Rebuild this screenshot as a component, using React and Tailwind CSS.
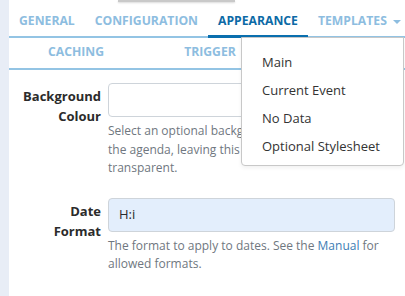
import React from 'react';

const font = { fontFamily: '"Open Sans", "Noto Sans", sans-serif' };

const topTabs = [
    { label: 'GENERAL' },
    { label: 'CONFIGURATION' },
    { label: 'APPEARANCE', active: true },
    { label: 'TEMPLATES', caret: true },
];

const subTabs = ['CACHING', 'TRIGGER', 'INTERACTIVE'];

const templateItems = ['Main', 'Current Event', 'No Data', 'Optional Stylesheet'];

function FieldRow({ label, children, help }) {
    return (
        <div className="flex gap-[7px]">
            <div className="w-[92px] shrink-0 pt-[3px] text-right text-[13px] font-bold leading-[20px] text-[#2b2b2b]">
                {label}
            </div>
            <div className="min-w-0 flex-1 pr-[10px]">
                {children}
                <p className="mt-[5px] text-[12px] leading-[18.5px] text-[#6f7780]">{help}</p>
            </div>
        </div>
    );
}

export default function App() {
    return (
        <div className="flex h-[296px] w-[405px] overflow-hidden bg-white" style={font}>
            <div className="w-[9px] shrink-0 bg-[#e8edf6]" />

            <div className="relative min-w-0 flex-1 overflow-hidden">
                <div className="ml-[109px] h-[2px] w-[117px] bg-[#c9c9c9] shadow-[0_1px_2px_rgba(0,0,0,0.15)]" />

                <ul className="flex h-[36px] items-end border-b-2 border-[#93c4e4]">
                    {topTabs.map((tab) => (
                        <li
                            key={tab.label}
                            className={`-mb-[2px] flex h-[36px] items-center px-[10px] pt-[5px] text-[12.2px] font-bold ${
                                tab.active
                                    ? 'border-b-[3px] border-[#0a6fae] text-[#0c6aa6]'
                                    : 'border-b-[3px] border-transparent text-[#8dbde0]'
                            }`}
                        >
                            {tab.label}
                            {tab.caret && (
                                <span className="ml-[6px] mt-[1px] inline-block border-x-[4px] border-t-[4px] border-x-transparent border-t-[#8dbde0]" />
                            )}
                        </li>
                    ))}
                </ul>

                <ul className="grid h-[32px] w-[402px] grid-cols-[134px_134px_134px] border-b-2 border-[#93c4e4]">
                    {subTabs.map((label) => (
                        <li key={label} className="flex items-center justify-center pb-[1px] text-[12.2px] font-bold text-[#8dbde0]">
                            {label}
                        </li>
                    ))}
                </ul>

                <div className="mt-[13px] flex flex-col gap-[20px]">
                    <FieldRow
                        label={<>Background<br />Colour</>}
                        help={<>Select an optional background colour to use for<br />the agenda, leaving this field empty will make it<br />transparent.</>}
                    >
                        <div className="h-[34px] rounded-[4px] border border-[#ced4da] bg-white" />
                    </FieldRow>

                    <FieldRow
                        label={<>Date<br />Format</>}
                        help={<>The format to apply to dates. See the <span className="text-[#3d7db4]">Manual</span> for allowed formats.</>}
                    >
                        <div className="flex h-[34px] items-center rounded-[4px] border border-[#ced4da] bg-[#e3eefc] px-[10px] text-[13px] text-[#2b2b2b]">
                            H:i
                        </div>
                    </FieldRow>
                </div>

                <div className="absolute left-[232px] top-[37px] w-[163px] rounded-b-[4px] border border-[#c8c8c8] bg-white pb-[5px] pt-[10px] shadow-[0_2px_4px_rgba(0,0,0,0.06)]">
                    {templateItems.map((item) => (
                        <div key={item} className="px-[20px] text-[13px] leading-[28px] text-[#333333]">
                            {item}
                        </div>
                    ))}
                </div>
            </div>
        </div>
    );
}
